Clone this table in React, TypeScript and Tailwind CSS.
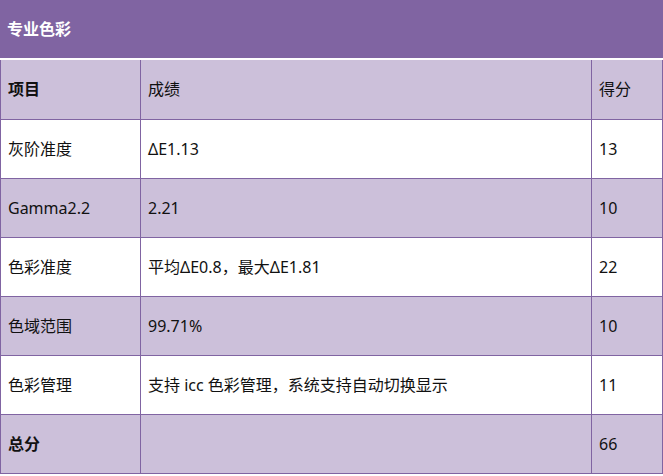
const rows = [
  { item: "灰阶准度", result: "ΔE1.13", score: "13", shade: false },
  { item: "Gamma2.2", result: "2.21", score: "10", shade: true },
  { item: "色彩准度", result: "平均ΔE0.8，最大ΔE1.81", score: "22", shade: false },
  { item: "色域范围", result: "99.71%", score: "10", shade: true },
  { item: "色彩管理", result: "支持 icc 色彩管理，系统支持自动切换显示", score: "11", shade: false },
];

const cell = "border border-[#8064a2] px-[7px] text-left align-middle";

export default function App() {
  return (
    <div
      className="w-[663px] h-[476px] bg-white text-[16px] text-[#111]"
      style={{ fontFamily: '"Noto Sans", "Noto Sans CJK SC", sans-serif' }}
    >
      <div className="h-[58px] bg-[#8064a2] flex items-center px-[7px] text-white font-bold">
        专业色彩
      </div>
      <div className="h-[2px]" />
      <table className="w-[662px] border-collapse table-fixed">
        <colgroup>
          <col className="w-[140px]" />
          <col className="w-[451px]" />
          <col className="w-[71px]" />
        </colgroup>
        <tbody>
          <tr className="h-[59px] bg-[#ccc0da]">
            <th className={`${cell} border-t-0 font-bold`}>项目</th>
            <th className={`${cell} border-t-0 font-normal`}>成绩</th>
            <th className={`${cell} border-t-0 font-normal`}>得分</th>
          </tr>
          {rows.map((r) => (
            <tr key={r.item} className={r.shade ? "h-[59px] bg-[#ccc0da]" : "h-[59px] bg-white"}>
              <td className={cell}>{r.item}</td>
              <td className={cell}>{r.result}</td>
              <td className={cell}>{r.score}</td>
            </tr>
          ))}
          <tr className="h-[59px] bg-[#ccc0da]">
            <td className={`${cell} font-bold`}>总分</td>
            <td className={cell}></td>
            <td className={cell}>66</td>
          </tr>
        </tbody>
      </table>
    </div>
  );
}
